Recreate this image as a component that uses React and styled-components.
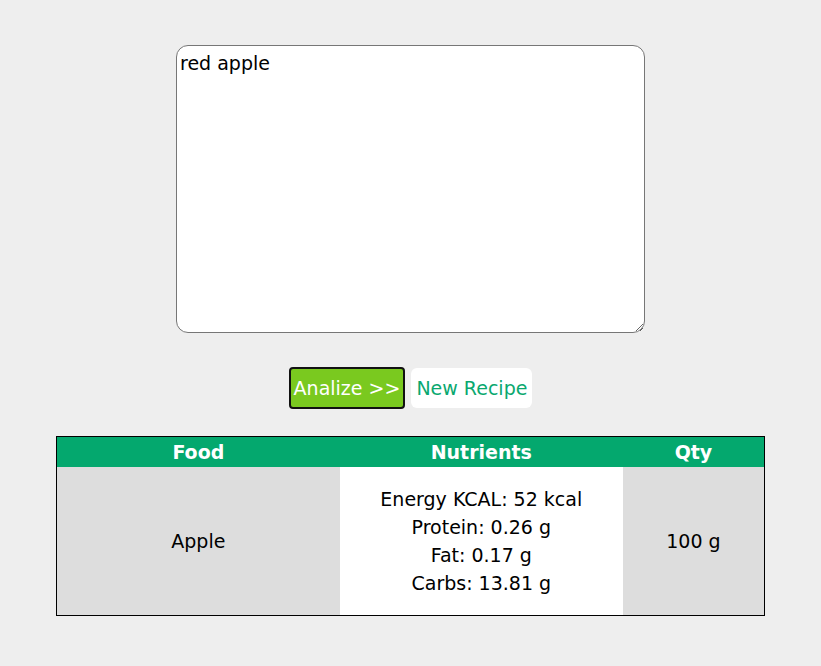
import React, { useState } from "react";
import styled, { createGlobalStyle } from "styled-components";

const GlobalStyle = createGlobalStyle`
  html, body {
    margin: 0;
    padding: 0;
    background: #eeeeee;
    font-family: "DejaVu Sans", Verdana, sans-serif;
  }
`;

const Page = styled.div`
  display: flex;
  flex-direction: column;
  align-items: center;
  padding-top: 45px;
  min-height: 666px;
  box-sizing: border-box;
`;

const Input = styled.textarea`
  width: 469px;
  height: 288px;
  box-sizing: border-box;
  border: 1px solid #767676;
  border-radius: 12px;
  background: #fff;
  padding: 6px 3px;
  font-family: "DejaVu Sans", Verdana, sans-serif;
  font-size: 19px;
  color: #000;
  outline: none;
  resize: both;
`;

const Actions = styled.div`
  display: flex;
  gap: 6px;
  margin-top: 34px;
`;

const Button = styled.button`
  height: ${(p) => (p.$primary ? "42px" : "40px")};
  margin-top: ${(p) => (p.$primary ? "0" : "1px")};
  padding: ${(p) => (p.$primary ? "0 3px" : "0 5px")};
  box-sizing: border-box;
  font-family: "DejaVu Sans", Verdana, sans-serif;
  font-size: 19px;
  border-radius: ${(p) => (p.$primary ? "4px" : "6px")};
  border: ${(p) => (p.$primary ? "2px solid #111" : "none")};
  background: ${(p) => (p.$primary ? "#7ac91f" : "#ffffff")};
  color: ${(p) => (p.$primary ? "#ffffff" : "#0aa86f")};
  cursor: pointer;
`;

const Table = styled.table`
  margin-top: 27px;
  width: 709px;
  border: 1px solid #000;
  border-collapse: collapse;
  font-size: 19px;
`;

const Head = styled.th`
  background: #04a86e;
  color: #fff;
  font-weight: bold;
  height: 30px;
  padding: 0;
  width: ${(p) => p.$w};
`;

const Cell = styled.td`
  background: ${(p) => (p.$alt ? "#dddddd" : "#ffffff")};
  text-align: center;
  height: 148px;
  padding: 0;
  color: #000;
`;

const Line = styled.div`
  line-height: 28px;
`;

const rows = [
  {
    food: "Apple",
    nutrients: [
      "Energy KCAL: 52 kcal",
      "Protein: 0.26 g",
      "Fat: 0.17 g",
      "Carbs: 13.81 g",
    ],
    qty: "100 g",
  },
];

export default function App() {
  const [text, setText] = useState("red apple");
  return (
    <>
      <GlobalStyle />
      <Page>
        <Input value={text} onChange={(e) => setText(e.target.value)} />
        <Actions>
          <Button $primary>Analize &gt;&gt;</Button>
          <Button>New Recipe</Button>
        </Actions>
        <Table>
          <thead>
            <tr>
              <Head $w="40%">Food</Head>
              <Head $w="40%">Nutrients</Head>
              <Head $w="20%">Qty</Head>
            </tr>
          </thead>
          <tbody>
            {rows.map((r) => (
              <tr key={r.food}>
                <Cell $alt>{r.food}</Cell>
                <Cell>
                  {r.nutrients.map((n) => (
                    <Line key={n}>{n}</Line>
                  ))}
                </Cell>
                <Cell $alt>{r.qty}</Cell>
              </tr>
            ))}
          </tbody>
        </Table>
      </Page>
    </>
  );
}
